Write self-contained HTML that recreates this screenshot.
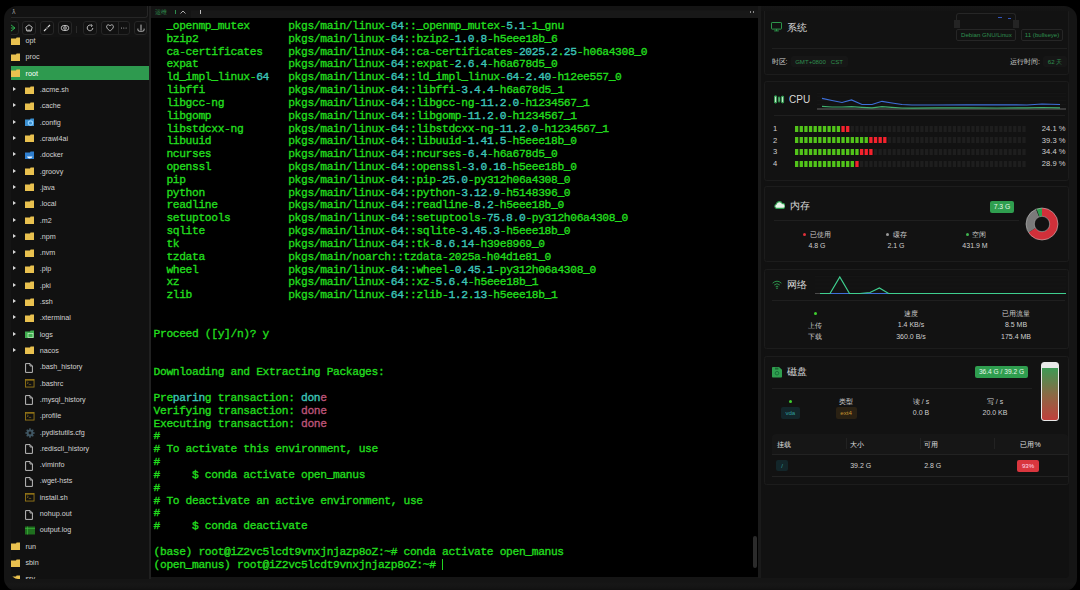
<!DOCTYPE html>
<html><head><meta charset="utf-8">
<style>
*{margin:0;padding:0;box-sizing:border-box}
html,body{width:1080px;height:590px;overflow:hidden;background:#000;font-family:"Liberation Sans",sans-serif}
.abs{position:absolute}
#win{position:absolute;left:3.5px;top:6px;width:1073.5px;height:584.5px;border-radius:13px;background:linear-gradient(#151515 0,#151515 576px,#171717 578px,#141414 582px,#101010 584px);overflow:hidden}
/* sidebar */
#side{position:absolute;left:11px;top:6px;width:138px;height:573px;background:#111;overflow:hidden;border-radius:7px 0 0 7px}
#pathin{position:absolute;z-index:2;left:-4px;top:0;width:141px;height:11.5px;border:1px solid #262626;border-top:none;border-radius:0 0 3px 3px;background:#121212}
#pathin span{position:absolute;left:4px;top:2px;font-size:7px;color:#9a9a9a}
#toolbar{position:absolute;z-index:2;left:0;top:11.5px;width:139px;height:19px;background:#131313}
.tb{position:absolute;top:3.3px;height:14.2px;border:1px solid #262626;border-radius:3px;background:#111}
.tb svg{position:absolute;left:50%;top:50%;transform:translate(-50%,-50%)}
.row{position:absolute;left:0;width:139px;height:14px}
.row.sel{background:#2e9a4f}
.row .ic{position:absolute;top:3px;height:9px;line-height:0}
.row .tx{position:absolute;top:1.5px;font-size:7.2px;color:#d2d2d2;white-space:nowrap;line-height:11px}
.row.sel .tx{color:#fff}
.arr{position:absolute;top:4.5px;width:0;height:0;border-left:3.4px solid #d8d8d8;border-top:2.5px solid transparent;border-bottom:2.5px solid transparent}
#vdiv{position:absolute;left:149.2px;top:6px;width:2.1px;height:573px;background:#202020}
/* terminal */
#term{position:absolute;left:151.4px;top:6px;width:606.6px;height:571px;background:#000;overflow:hidden}
#tabbar{position:absolute;left:0;top:0;width:100%;height:12px;background:linear-gradient(#141414 0,#141414 4px,#181818 5px,#181818 100%)}
#tab{position:absolute;left:0;top:0;width:40px;height:12px;background:#141414}
#tlines{position:absolute;left:2.2px;top:13.9px;font-weight:normal;-webkit-text-stroke:0.35px currentColor;font-family:"Liberation Mono",monospace;font-size:11.3px;letter-spacing:-0.37px;line-height:12.83px;color:#22dc1e;white-space:pre}
#tlines i{font-style:normal;color:#3cc4b8}
#tlines b{font-weight:normal;color:#bd5478}
.cur{display:inline-block;width:1px;height:11px;background:#21d421;vertical-align:-2px}
#sthumb{position:absolute;left:602px;top:530px;width:3.6px;height:32px;border-radius:2px;background:#2b2b2b}
#rdiv{position:absolute;left:758px;top:6px;width:3px;height:572px;background:#1a1a1a}
/* right panel */
#rp{position:absolute;left:761px;top:6px;width:308px;height:572px;background:#111;overflow:hidden;border-radius:0 6px 4px 0}
.card{position:absolute;left:3px;width:305px;border:1px solid #1c1c1c;border-radius:2.5px;background:#121212}
.ttl{position:absolute;font-size:10px;color:#d8d8d8;white-space:nowrap}
.sep{position:absolute;height:1px;background:#1f1f1f}
.lbl{position:absolute;font-size:7px;color:#cfcfcf;white-space:nowrap}
.tag{position:absolute;font-size:6.1px;border-radius:2px;text-align:center;white-space:nowrap}
.cpur{position:absolute;left:0;width:304px;height:6px}
.cpur .cn{position:absolute;left:8px;top:-1.5px;font-size:7.6px;color:#cfcfcf}
.cpur .segs{position:absolute;left:29.5px;top:0;height:6px;width:232px}
.cpur .segs span{position:absolute;top:0;width:3.3px;height:6px}
.cpur .cp{position:absolute;right:3.5px;top:-1.5px;font-size:7.6px;color:#cfcfcf}
.ctr{text-align:center}
</style></head><body>
<div id="win"></div>

<!-- SIDEBAR -->
<div id="side">
  <div id="pathin"><span>ƛ</span></div>
  <div id="toolbar">
    <div class="tb" style="left:-4px;width:11.5px"><svg width="7" height="8" viewBox="0 0 7 8"><path d="M1 0.5l4.5 3.5L1 7.5M0 4h5.5" fill="none" stroke="#2fae4f" stroke-width="1"/></svg></div>
    <div class="tb" style="left:11px;width:14px"><svg width="8" height="8" viewBox="0 0 8 8"><path d="M4 0.8L7.2 3.2L6.2 7H1.8L0.8 3.2Z" fill="none" stroke="#d0d0d0" stroke-width="0.9"/><path d="M2.3 6.2h3.4" stroke="#d0d0d0" stroke-width="0.8"/></svg></div>
    <div class="tb" style="left:29px;width:13.5px"><svg width="8" height="8" viewBox="0 0 8 8"><path d="M1 7L3.2 4.8M4.8 3.2L7 1" stroke="#d8d8d8" stroke-width="1.2"/><circle cx="4" cy="4" r="0.7" fill="#d8d8d8"/></svg></div>
    <div class="tb" style="left:46.5px;width:14px"><svg width="9" height="7" viewBox="0 0 9 7"><ellipse cx="4.5" cy="3.5" rx="4" ry="2.6" fill="none" stroke="#cfcfcf" stroke-width="0.9"/><circle cx="4.5" cy="3.5" r="1.3" fill="none" stroke="#cfcfcf" stroke-width="0.9"/></svg></div>
    <div class="abs" style="left:65.4px;top:8px;width:1px;height:7px;background:#2a2a2a"></div>
    <div class="tb" style="left:72.4px;width:14px"><svg width="8" height="8" viewBox="0 0 8 8"><path d="M6.8 4A2.8 2.8 0 1 1 5.6 1.6" fill="none" stroke="#d0d0d0" stroke-width="0.9"/><path d="M5 0.4L6.4 1.6L5 2.8" fill="none" stroke="#d0d0d0" stroke-width="0.8"/></svg></div>
    <div class="tb" style="left:90.3px;width:29px"><svg style="left:7.8px" width="8" height="8" viewBox="0 0 8 8"><path d="M4 7C4 7 0.6 4.8 0.6 2.7C0.6 1.5 1.4 0.8 2.3 0.8C3.1 0.8 3.7 1.3 4 1.9C4.3 1.3 4.9 0.8 5.7 0.8C6.6 0.8 7.4 1.5 7.4 2.7C7.4 4.8 4 7 4 7Z" fill="none" stroke="#cfcfcf" stroke-width="0.85"/></svg><div class="abs" style="left:15.3px;top:0;width:1px;height:12.2px;background:#262626"></div><svg style="left:21.3px" width="7" height="2" viewBox="0 0 7 2"><circle cx="1" cy="1" r="0.55" fill="#bbb"/><circle cx="3.3" cy="1" r="0.55" fill="#bbb"/><circle cx="5.6" cy="1" r="0.55" fill="#bbb"/></svg></div>
    <div class="tb" style="left:123px;width:13.3px"><svg width="8" height="8" viewBox="0 0 8 8"><path d="M4 0.6v5.6M0.9 4.6v1.2q0 1.4 1.4 1.4h3.4q1.4 0 1.4-1.4V4.6" fill="none" stroke="#d0d0d0" stroke-width="0.9"/></svg></div>
  </div>
  <div id="tree" style="position:absolute;left:0;top:0;width:139px;height:573px">
<div class="row" style="top:27.60px"><span class="ic" style="left:0px"><svg width="9" height="8" viewBox="0 0 9 8"><path d="M0 1.6V8h9V0.6H5.6L5 1.6z" fill="#e9c14f"/></svg></span><span class="tx" style="left:14.5px">opt</span></div>
<div class="row" style="top:43.91px"><span class="ic" style="left:0px"><svg width="9" height="8" viewBox="0 0 9 8"><path d="M0 1.6V8h9V0.6H5.6L5 1.6z" fill="#e9c14f"/></svg></span><span class="tx" style="left:14.5px">proc</span></div>
<div class="row sel" style="top:60.22px"><span class="ic" style="left:0px"><svg width="9" height="8" viewBox="0 0 9 8"><path d="M0 1.6V8h9V0.6H5.6L5 1.6z" fill="#e9c14f"/></svg></span><span class="tx" style="left:14.5px">root</span></div>
<div class="row" style="top:76.53px"><span class="arr" style="left:2px"></span><span class="ic" style="left:14px"><svg width="9" height="8" viewBox="0 0 9 8"><path d="M0 1.6V8h9V0.6H5.6L5 1.6z" fill="#e9c14f"/></svg></span><span class="tx" style="left:28.7px">.acme.sh</span></div>
<div class="row" style="top:92.84px"><span class="arr" style="left:2px"></span><span class="ic" style="left:14px"><svg width="9" height="8" viewBox="0 0 9 8"><path d="M0 1.6V8h9V0.6H5.6L5 1.6z" fill="#e9c14f"/></svg></span><span class="tx" style="left:28.7px">.cache</span></div>
<div class="row" style="top:109.15px"><span class="arr" style="left:2px"></span><span class="ic" style="left:14px"><svg width="10" height="9" viewBox="0 0 10 9"><path d="M0 1.6V8h9V0.6H5.6L5 1.6z" fill="#3b8fd0"/><circle cx="5.5" cy="5" r="2.2" fill="none" stroke="#8fd0ff" stroke-width="1.2"/></svg></span><span class="tx" style="left:28.7px">.config</span></div>
<div class="row" style="top:125.46px"><span class="arr" style="left:2px"></span><span class="ic" style="left:14px"><svg width="9" height="8" viewBox="0 0 9 8"><path d="M0 1.6V8h9V0.6H5.6L5 1.6z" fill="#e9c14f"/></svg></span><span class="tx" style="left:28.7px">.crawl4ai</span></div>
<div class="row" style="top:141.77px"><span class="arr" style="left:2px"></span><span class="ic" style="left:14px"><svg width="10" height="9" viewBox="0 0 10 9"><path d="M0 1.6V8h9V0.6H5.6L5 1.6z" fill="#2f7fd0"/><path d="M2 5.5h5.5q-0.5 2-3 2q-2 0-2.5-2z" fill="#e8f4ff"/></svg></span><span class="tx" style="left:28.7px">.docker</span></div>
<div class="row" style="top:158.08px"><span class="arr" style="left:2px"></span><span class="ic" style="left:14px"><svg width="9" height="8" viewBox="0 0 9 8"><path d="M0 1.6V8h9V0.6H5.6L5 1.6z" fill="#e9c14f"/></svg></span><span class="tx" style="left:28.7px">.groovy</span></div>
<div class="row" style="top:174.39px"><span class="arr" style="left:2px"></span><span class="ic" style="left:14px"><svg width="9" height="8" viewBox="0 0 9 8"><path d="M0 1.6V8h9V0.6H5.6L5 1.6z" fill="#e9c14f"/></svg></span><span class="tx" style="left:28.7px">.java</span></div>
<div class="row" style="top:190.70px"><span class="arr" style="left:2px"></span><span class="ic" style="left:14px"><svg width="9" height="8" viewBox="0 0 9 8"><path d="M0 1.6V8h9V0.6H5.6L5 1.6z" fill="#e9c14f"/></svg></span><span class="tx" style="left:28.7px">.local</span></div>
<div class="row" style="top:207.01px"><span class="arr" style="left:2px"></span><span class="ic" style="left:14px"><svg width="9" height="8" viewBox="0 0 9 8"><path d="M0 1.6V8h9V0.6H5.6L5 1.6z" fill="#e9c14f"/></svg></span><span class="tx" style="left:28.7px">.m2</span></div>
<div class="row" style="top:223.32px"><span class="arr" style="left:2px"></span><span class="ic" style="left:14px"><svg width="9" height="8" viewBox="0 0 9 8"><path d="M0 1.6V8h9V0.6H5.6L5 1.6z" fill="#e9c14f"/></svg></span><span class="tx" style="left:28.7px">.npm</span></div>
<div class="row" style="top:239.63px"><span class="arr" style="left:2px"></span><span class="ic" style="left:14px"><svg width="9" height="8" viewBox="0 0 9 8"><path d="M0 1.6V8h9V0.6H5.6L5 1.6z" fill="#e9c14f"/></svg></span><span class="tx" style="left:28.7px">.nvm</span></div>
<div class="row" style="top:255.94px"><span class="arr" style="left:2px"></span><span class="ic" style="left:14px"><svg width="9" height="8" viewBox="0 0 9 8"><path d="M0 1.6V8h9V0.6H5.6L5 1.6z" fill="#e9c14f"/></svg></span><span class="tx" style="left:28.7px">.pip</span></div>
<div class="row" style="top:272.25px"><span class="arr" style="left:2px"></span><span class="ic" style="left:14px"><svg width="9" height="8" viewBox="0 0 9 8"><path d="M0 1.6V8h9V0.6H5.6L5 1.6z" fill="#e9c14f"/></svg></span><span class="tx" style="left:28.7px">.pki</span></div>
<div class="row" style="top:288.56px"><span class="arr" style="left:2px"></span><span class="ic" style="left:14px"><svg width="9" height="8" viewBox="0 0 9 8"><path d="M0 1.6V8h9V0.6H5.6L5 1.6z" fill="#e9c14f"/></svg></span><span class="tx" style="left:28.7px">.ssh</span></div>
<div class="row" style="top:304.87px"><span class="arr" style="left:2px"></span><span class="ic" style="left:14px"><svg width="9" height="8" viewBox="0 0 9 8"><path d="M0 1.6V8h9V0.6H5.6L5 1.6z" fill="#e9c14f"/></svg></span><span class="tx" style="left:28.7px">.xterminal</span></div>
<div class="row" style="top:321.18px"><span class="arr" style="left:2px"></span><span class="ic" style="left:14px"><svg width="10" height="9" viewBox="0 0 10 9"><path d="M0 1.6V8h9V0.6H5.6L5 1.6z" fill="#3fae4f"/><rect x="3" y="3.5" width="5" height="4" fill="none" stroke="#c8f0c8" stroke-width="0.7"/></svg></span><span class="tx" style="left:28.7px">logs</span></div>
<div class="row" style="top:337.49px"><span class="arr" style="left:2px"></span><span class="ic" style="left:14px"><svg width="9" height="8" viewBox="0 0 9 8"><path d="M0 1.6V8h9V0.6H5.6L5 1.6z" fill="#e9c14f"/></svg></span><span class="tx" style="left:28.7px">nacos</span></div>
<div class="row" style="top:353.80px"><span class="ic" style="left:14px"><svg width="8" height="10" viewBox="0 0 8 10"><path d="M0.6 0.6h4.4l2.4 2.4v6.4H0.6z" fill="none" stroke="#cfcfcf" stroke-width="0.9"/><path d="M5 0.6v2.4h2.4" fill="none" stroke="#cfcfcf" stroke-width="0.8"/></svg></span><span class="tx" style="left:28.7px">.bash_history</span></div>
<div class="row" style="top:370.11px"><span class="ic" style="left:14px"><svg width="10" height="9" viewBox="0 0 10 9"><rect x="0.45" y="0.45" width="8.6" height="7.6" fill="none" stroke="#977818" stroke-width="0.9"/><path d="M0.45 1.3h8.6" stroke="#977818" stroke-width="0.8"/><path d="M1.8 2.6l1.6 1.2L1.8 5M3.8 5.4h2.4" fill="none" stroke="#8a6e18" stroke-width="0.7"/></svg></span><span class="tx" style="left:28.7px">.bashrc</span></div>
<div class="row" style="top:386.42px"><span class="ic" style="left:14px"><svg width="8" height="10" viewBox="0 0 8 10"><path d="M0.6 0.6h4.4l2.4 2.4v6.4H0.6z" fill="none" stroke="#cfcfcf" stroke-width="0.9"/><path d="M5 0.6v2.4h2.4" fill="none" stroke="#cfcfcf" stroke-width="0.8"/></svg></span><span class="tx" style="left:28.7px">.mysql_history</span></div>
<div class="row" style="top:402.73px"><span class="ic" style="left:14px"><svg width="10" height="9" viewBox="0 0 10 9"><rect x="0.45" y="0.45" width="8.6" height="7.6" fill="none" stroke="#977818" stroke-width="0.9"/><path d="M0.45 1.3h8.6" stroke="#977818" stroke-width="0.8"/><path d="M1.8 2.6l1.6 1.2L1.8 5M3.8 5.4h2.4" fill="none" stroke="#8a6e18" stroke-width="0.7"/></svg></span><span class="tx" style="left:28.7px">.profile</span></div>
<div class="row" style="top:419.04px"><span class="ic" style="left:14px"><svg width="10" height="10" viewBox="0 0 10 10"><path d="M9.64 4.26 L9.64 5.74 L8.40 5.82 L7.98 6.83 L8.80 7.76 L7.76 8.80 L6.83 7.98 L5.82 8.40 L5.74 9.64 L4.26 9.64 L4.18 8.40 L3.17 7.98 L2.24 8.80 L1.20 7.76 L2.02 6.83 L1.60 5.82 L0.36 5.74 L0.36 4.26 L1.60 4.18 L2.02 3.17 L1.20 2.24 L2.24 1.20 L3.17 2.02 L4.18 1.60 L4.26 0.36 L5.74 0.36 L5.82 1.60 L6.83 2.02 L7.76 1.20 L8.80 2.24 L7.98 3.17 L8.40 4.18Z" fill="#3f5663"/><circle cx="5" cy="5" r="1.4" fill="#111"/></svg></span><span class="tx" style="left:28.7px">.pydistutils.cfg</span></div>
<div class="row" style="top:435.35px"><span class="ic" style="left:14px"><svg width="8" height="10" viewBox="0 0 8 10"><path d="M0.6 0.6h4.4l2.4 2.4v6.4H0.6z" fill="none" stroke="#cfcfcf" stroke-width="0.9"/><path d="M5 0.6v2.4h2.4" fill="none" stroke="#cfcfcf" stroke-width="0.8"/></svg></span><span class="tx" style="left:28.7px">.rediscli_history</span></div>
<div class="row" style="top:451.66px"><span class="ic" style="left:14px"><svg width="8" height="10" viewBox="0 0 8 10"><path d="M0.6 0.6h4.4l2.4 2.4v6.4H0.6z" fill="none" stroke="#cfcfcf" stroke-width="0.9"/><path d="M5 0.6v2.4h2.4" fill="none" stroke="#cfcfcf" stroke-width="0.8"/></svg></span><span class="tx" style="left:28.7px">.viminfo</span></div>
<div class="row" style="top:467.97px"><span class="ic" style="left:14px"><svg width="8" height="10" viewBox="0 0 8 10"><path d="M0.6 0.6h4.4l2.4 2.4v6.4H0.6z" fill="none" stroke="#cfcfcf" stroke-width="0.9"/><path d="M5 0.6v2.4h2.4" fill="none" stroke="#cfcfcf" stroke-width="0.8"/></svg></span><span class="tx" style="left:28.7px">.wget-hsts</span></div>
<div class="row" style="top:484.28px"><span class="ic" style="left:14px"><svg width="10" height="9" viewBox="0 0 10 9"><rect x="0.45" y="0.45" width="8.6" height="7.6" fill="none" stroke="#977818" stroke-width="0.9"/><path d="M0.45 1.3h8.6" stroke="#977818" stroke-width="0.8"/><path d="M1.8 2.6l1.6 1.2L1.8 5M3.8 5.4h2.4" fill="none" stroke="#8a6e18" stroke-width="0.7"/></svg></span><span class="tx" style="left:28.7px">install.sh</span></div>
<div class="row" style="top:500.59px"><span class="ic" style="left:14px"><svg width="8" height="10" viewBox="0 0 8 10"><path d="M0.6 0.6h4.4l2.4 2.4v6.4H0.6z" fill="none" stroke="#cfcfcf" stroke-width="0.9"/><path d="M5 0.6v2.4h2.4" fill="none" stroke="#cfcfcf" stroke-width="0.8"/></svg></span><span class="tx" style="left:28.7px">nohup.out</span></div>
<div class="row" style="top:516.90px"><span class="ic" style="left:14px"><svg width="10" height="9" viewBox="0 0 10 9"><rect x="0" y="0.5" width="10" height="8" fill="#1f6f1f"/><path d="M2.5 0.5v8M0 2.5h10" stroke="#3fbf3f" stroke-width="0.6"/></svg></span><span class="tx" style="left:28.7px">output.log</span></div>
<div class="row" style="top:533.21px"><span class="ic" style="left:0px"><svg width="9" height="8" viewBox="0 0 9 8"><path d="M0 1.6V8h9V0.6H5.6L5 1.6z" fill="#e9c14f"/></svg></span><span class="tx" style="left:14.5px">run</span></div>
<div class="row" style="top:549.52px"><span class="ic" style="left:0px"><svg width="9" height="8" viewBox="0 0 9 8"><path d="M0 1.6V8h9V0.6H5.6L5 1.6z" fill="#e9c14f"/></svg></span><span class="tx" style="left:14.5px">sbin</span></div>
<div class="row" style="top:565.83px"><span class="ic" style="left:0px"><svg width="9" height="8" viewBox="0 0 9 8"><path d="M0 1.6V8h9V0.6H5.6L5 1.6z" fill="#e9c14f"/></svg></span><span class="tx" style="left:14.5px">srv</span></div>
  </div>
</div>
<div id="vdiv"></div>

<!-- TERMINAL -->
<div id="term">
  <div id="tabbar"><div id="tab"></div>
    <span class="abs" style="left:4px;top:3px;font-size:5.5px;color:#2f8f4f">运维</span>
    <span class="abs" style="left:24px;top:3.5px;width:1px;height:4px;background:#2f8f4f"></span>
    <svg class="abs" style="left:29px;top:3.5px" width="6" height="4" viewBox="0 0 6 4"><path d="M0.5 3.5L3 1L5.5 3.5" fill="none" stroke="#bbb" stroke-width="0.9"/></svg>
    <span class="abs" style="left:48.5px;top:3.5px;width:1px;height:4px;background:#bbb"></span>
    <span class="abs" style="left:598.6px;top:5.2px;width:1px;height:1.5px;background:#888"></span>
    <span class="abs" style="left:601.8px;top:5.2px;width:1px;height:1.5px;background:#888"></span>
  </div>
  <div id="tlines"><div class="ln">  _openmp_mutex      pkgs/main/linux-<i>64</i>::_openmp_mutex-<i>5.1</i>-1_gnu</div><div class="ln">  bzip2              pkgs/main/linux-<i>64</i>::bzip2-<i>1.0</i>.<i>8</i>-h5eee18b_6</div><div class="ln">  ca-certificates    pkgs/main/linux-<i>64</i>::ca-certificates-<i>2025.2</i>.<i>25</i>-h06a4308_0</div><div class="ln">  expat              pkgs/main/linux-<i>64</i>::expat-<i>2.6</i>.<i>4</i>-h6a678d5_0</div><div class="ln">  ld_impl_linux-<i>64</i>   pkgs/main/linux-<i>64</i>::ld_impl_linux-<i>64</i>-<i>2.40</i>-h12ee557_0</div><div class="ln">  libffi             pkgs/main/linux-<i>64</i>::libffi-<i>3.4</i>.<i>4</i>-h6a678d5_1</div><div class="ln">  libgcc-ng          pkgs/main/linux-<i>64</i>::libgcc-ng-<i>11.2</i>.<i>0</i>-h1234567_1</div><div class="ln">  libgomp            pkgs/main/linux-<i>64</i>::libgomp-<i>11.2</i>.<i>0</i>-h1234567_1</div><div class="ln">  libstdcxx-ng       pkgs/main/linux-<i>64</i>::libstdcxx-ng-<i>11.2</i>.<i>0</i>-h1234567_1</div><div class="ln">  libuuid            pkgs/main/linux-<i>64</i>::libuuid-<i>1.41</i>.<i>5</i>-h5eee18b_0</div><div class="ln">  ncurses            pkgs/main/linux-<i>64</i>::ncurses-<i>6.4</i>-h6a678d5_0</div><div class="ln">  openssl            pkgs/main/linux-<i>64</i>::openssl-<i>3.0</i>.<i>16</i>-h5eee18b_0</div><div class="ln">  pip                pkgs/main/linux-<i>64</i>::pip-<i>25.0</i>-py312h06a4308_0</div><div class="ln">  python             pkgs/main/linux-<i>64</i>::python-<i>3.12</i>.<i>9</i>-h5148396_0</div><div class="ln">  readline           pkgs/main/linux-<i>64</i>::readline-<i>8.2</i>-h5eee18b_0</div><div class="ln">  setuptools         pkgs/main/linux-<i>64</i>::setuptools-<i>75.8</i>.<i>0</i>-py312h06a4308_0</div><div class="ln">  sqlite             pkgs/main/linux-<i>64</i>::sqlite-<i>3.45</i>.<i>3</i>-h5eee18b_0</div><div class="ln">  tk                 pkgs/main/linux-<i>64</i>::tk-<i>8.6</i>.<i>14</i>-h39e8969_0</div><div class="ln">  tzdata             pkgs/main/noarch::tzdata-2025a-h04d1e81_0</div><div class="ln">  wheel              pkgs/main/linux-<i>64</i>::wheel-<i>0.45</i>.<i>1</i>-py312h06a4308_0</div><div class="ln">  xz                 pkgs/main/linux-<i>64</i>::xz-<i>5.6</i>.<i>4</i>-h5eee18b_1</div><div class="ln">  zlib               pkgs/main/linux-<i>64</i>::zlib-<i>1.2</i>.<i>13</i>-h5eee18b_1</div><div class="ln">&nbsp;</div><div class="ln">&nbsp;</div><div class="ln">Proceed ([y]/n)? y</div><div class="ln">&nbsp;</div><div class="ln">&nbsp;</div><div class="ln">Downloading and Extracting Packages:</div><div class="ln">&nbsp;</div><div class="ln">Pre<i>parin</i>g transaction: <i>don</i><b>e</b></div><div class="ln">Verifying transaction: <b>done</b></div><div class="ln">Executing transaction: <b>done</b></div><div class="ln">#</div><div class="ln"># To activate this environment, use</div><div class="ln">#</div><div class="ln">#     $ conda activate open_manus</div><div class="ln">#</div><div class="ln"># To deactivate an active environment, use</div><div class="ln">#</div><div class="ln">#     $ conda deactivate</div><div class="ln">&nbsp;</div><div class="ln">(base) root@iZ2vc5lcdt9vnxjnjazp8oZ:~# conda activate open_manus</div><div class="ln">(open_manus) root@iZ2vc5lcdt9vnxjnjazp8oZ:~# <span class="cur"></span></div></div>
  <div id="sthumb"></div>
</div>
<div id="rdiv"></div>

<!-- RIGHT PANEL -->
<div id="rp">
  <!-- card 1 system -->
  <div class="card" style="top:-6px;height:74.6px"></div>
  <div class="abs" style="left:0;top:0;width:308px;height:5px;background:linear-gradient(#161616,#131313)"></div>
  <!-- card 2 cpu -->
  <div class="card" style="top:75px;height:99.5px"></div>
  <!-- card 3 mem -->
  <div class="card" style="top:180.4px;height:75.5px"></div>
  <!-- card 4 net -->
  <div class="card" style="top:262.8px;height:80.6px"></div>
  <!-- card 5 disk -->
  <div class="card" style="top:350.4px;height:128.4px"></div>
</div>

<!-- right panel content in page coordinates -->
<div id="rpc" style="position:absolute;left:0;top:0;width:1080px;height:590px">
  <!-- system -->
  <svg class="abs" style="left:771px;top:22px" width="11" height="9.5" viewBox="0 0 11 9.5"><rect x="0.5" y="0.5" width="10" height="6.6" rx="0.6" fill="none" stroke="#2f9e4f" stroke-width="0.95"/><path d="M5.5 7.1v1.8M3.2 8.9h4.6" stroke="#2f9e4f" stroke-width="0.95"/></svg>
  <span class="ttl" style="left:787px;top:20.8px">系统</span>
  <div class="abs" style="left:956px;top:13px;width:60px;height:15px;border:1px solid #262626;border-bottom:none;border-radius:3px 3px 0 0;background:#121212"></div>
  <div class="abs" style="left:954px;top:19.5px;width:6px;height:8px;background:#242424"></div>
  <div class="abs" style="left:1012.5px;top:19.5px;width:6px;height:8px;background:#242424"></div>
  <div class="abs" style="left:998px;top:17px;width:4px;height:1px;background:#3355bb"></div>
  <div class="abs" style="left:1007.5px;top:18px;width:3.5px;height:1px;background:#3355bb"></div>
  <div class="tag" style="left:956.3px;top:29.4px;width:60.2px;height:11.2px;line-height:9.5px;border:1px solid #262626;color:#2f8f4f;background:#121212">Debian GNU/Linux</div>
  <div class="tag" style="left:1021.3px;top:29.4px;width:41.5px;height:11.2px;line-height:9.5px;border:1px solid #262626;color:#2f8f4f;background:#121212">11 (bullseye)</div>
  <div class="sep" style="left:771.5px;top:48px;width:295.5px"></div>
  <span class="lbl" style="left:771.5px;top:56.5px">时区:</span>
  <div class="tag" style="left:790.6px;top:56px;width:57px;height:11px;line-height:11px;color:#2f8f4f;background:#161616">GMT+0800&nbsp;&nbsp;&nbsp;CST</div>
  <span class="lbl" style="left:1010px;top:56.5px">运行时间:</span>
  <div class="tag" style="left:1043px;top:55.6px;width:24px;height:11.4px;line-height:11.4px;color:#2f8f4f;background:#161616">62 天</div>

  <!-- cpu -->
  <svg class="abs" style="left:774px;top:95px" width="11" height="9" viewBox="0 0 11 9"><path d="M1.6 0v9M5.1 1v7M8.6 0.4v8.4" stroke="#2f9e4f" stroke-width="0.6"/><rect x="0.6" y="1.2" width="2" height="6.4" fill="#cfe8d4" stroke="#2f9e4f" stroke-width="0.9"/><rect x="4.3" y="2.6" width="1.6" height="3.8" fill="#7fc08f" stroke="#2f9e4f" stroke-width="0.7"/><rect x="7.6" y="1.6" width="2" height="5.8" fill="#cfe8d4" stroke="#2f9e4f" stroke-width="0.9"/></svg>
  <span class="ttl" style="left:789px;top:94.2px">CPU</span>
  <svg class="abs" style="left:817px;top:90px" width="249" height="20" viewBox="0 0 249 20">
    <path d="M0 3.4h249M0 6.9h249M0 10.6h249M0 14.5h249" stroke="#191919" stroke-width="0.6"/>
    <path d="M0 19h249" stroke="#4a4a4a" stroke-width="1.3"/>
    <polyline points="5,8.3 15,10.5 25,12.5 34.5,10 45,14.5 55,14.5 65,11.3 75,13 85,14.5 95,15 120,15 150,14.8 180,14.8 210,15 225,14 243,14.5" fill="none" stroke="#3d6fd8" stroke-width="1.2"/>
    <polyline points="5,16.4 15,17 25,17 34.5,16.6 45,17.3 55,17.8 65,16.6 75,17.3 85,18 95,18.2 120,17.8 150,17.8 180,18 210,17.8 225,17.5 243,17.8" fill="none" stroke="#3fae6f" stroke-width="1.2"/>
  </svg>
  <div class="sep" style="left:774px;top:115px;width:291px"></div>
  <div style="position:absolute;left:765px;top:0">
<div class="cpur" style="top:125.60px"><span class="cn">1</span><div class="segs"><svg width="232" height="6" style="position:absolute;left:0;top:0"><rect x="0.00" y="0" width="3.3" height="6" fill="#52c41a"/><rect x="4.64" y="0" width="3.3" height="6" fill="#52c41a"/><rect x="9.28" y="0" width="3.3" height="6" fill="#52c41a"/><rect x="13.92" y="0" width="3.3" height="6" fill="#52c41a"/><rect x="18.56" y="0" width="3.3" height="6" fill="#52c41a"/><rect x="23.20" y="0" width="3.3" height="6" fill="#52c41a"/><rect x="27.84" y="0" width="3.3" height="6" fill="#52c41a"/><rect x="32.48" y="0" width="3.3" height="6" fill="#52c41a"/><rect x="37.12" y="0" width="3.3" height="6" fill="#52c41a"/><rect x="41.76" y="0" width="3.3" height="6" fill="#52c41a"/><rect x="46.40" y="0" width="3.3" height="6" fill="#f5222d"/><rect x="51.04" y="0" width="3.3" height="6" fill="#f5222d"/><rect x="55.68" y="0" width="3.3" height="6" fill="#1e1e1e"/><rect x="60.32" y="0" width="3.3" height="6" fill="#1e1e1e"/><rect x="64.96" y="0" width="3.3" height="6" fill="#1e1e1e"/><rect x="69.60" y="0" width="3.3" height="6" fill="#1e1e1e"/><rect x="74.24" y="0" width="3.3" height="6" fill="#1e1e1e"/><rect x="78.88" y="0" width="3.3" height="6" fill="#1e1e1e"/><rect x="83.52" y="0" width="3.3" height="6" fill="#1e1e1e"/><rect x="88.16" y="0" width="3.3" height="6" fill="#1e1e1e"/><rect x="92.80" y="0" width="3.3" height="6" fill="#1e1e1e"/><rect x="97.44" y="0" width="3.3" height="6" fill="#1e1e1e"/><rect x="102.08" y="0" width="3.3" height="6" fill="#1e1e1e"/><rect x="106.72" y="0" width="3.3" height="6" fill="#1e1e1e"/><rect x="111.36" y="0" width="3.3" height="6" fill="#1e1e1e"/><rect x="116.00" y="0" width="3.3" height="6" fill="#1e1e1e"/><rect x="120.64" y="0" width="3.3" height="6" fill="#1e1e1e"/><rect x="125.28" y="0" width="3.3" height="6" fill="#1e1e1e"/><rect x="129.92" y="0" width="3.3" height="6" fill="#1e1e1e"/><rect x="134.56" y="0" width="3.3" height="6" fill="#1e1e1e"/><rect x="139.20" y="0" width="3.3" height="6" fill="#1e1e1e"/><rect x="143.84" y="0" width="3.3" height="6" fill="#1e1e1e"/><rect x="148.48" y="0" width="3.3" height="6" fill="#1e1e1e"/><rect x="153.12" y="0" width="3.3" height="6" fill="#1e1e1e"/><rect x="157.76" y="0" width="3.3" height="6" fill="#1e1e1e"/><rect x="162.40" y="0" width="3.3" height="6" fill="#1e1e1e"/><rect x="167.04" y="0" width="3.3" height="6" fill="#1e1e1e"/><rect x="171.68" y="0" width="3.3" height="6" fill="#1e1e1e"/><rect x="176.32" y="0" width="3.3" height="6" fill="#1e1e1e"/><rect x="180.96" y="0" width="3.3" height="6" fill="#1e1e1e"/><rect x="185.60" y="0" width="3.3" height="6" fill="#1e1e1e"/><rect x="190.24" y="0" width="3.3" height="6" fill="#1e1e1e"/><rect x="194.88" y="0" width="3.3" height="6" fill="#1e1e1e"/><rect x="199.52" y="0" width="3.3" height="6" fill="#1e1e1e"/><rect x="204.16" y="0" width="3.3" height="6" fill="#1e1e1e"/><rect x="208.80" y="0" width="3.3" height="6" fill="#1e1e1e"/><rect x="213.44" y="0" width="3.3" height="6" fill="#1e1e1e"/><rect x="218.08" y="0" width="3.3" height="6" fill="#1e1e1e"/><rect x="222.72" y="0" width="3.3" height="6" fill="#1e1e1e"/><rect x="227.36" y="0" width="3.3" height="6" fill="#1e1e1e"/></svg></div><span class="cp">24.1 %</span></div>
<div class="cpur" style="top:137.27px"><span class="cn">2</span><div class="segs"><svg width="232" height="6" style="position:absolute;left:0;top:0"><rect x="0.00" y="0" width="3.3" height="6" fill="#52c41a"/><rect x="4.64" y="0" width="3.3" height="6" fill="#52c41a"/><rect x="9.28" y="0" width="3.3" height="6" fill="#52c41a"/><rect x="13.92" y="0" width="3.3" height="6" fill="#52c41a"/><rect x="18.56" y="0" width="3.3" height="6" fill="#52c41a"/><rect x="23.20" y="0" width="3.3" height="6" fill="#52c41a"/><rect x="27.84" y="0" width="3.3" height="6" fill="#52c41a"/><rect x="32.48" y="0" width="3.3" height="6" fill="#52c41a"/><rect x="37.12" y="0" width="3.3" height="6" fill="#52c41a"/><rect x="41.76" y="0" width="3.3" height="6" fill="#52c41a"/><rect x="46.40" y="0" width="3.3" height="6" fill="#52c41a"/><rect x="51.04" y="0" width="3.3" height="6" fill="#52c41a"/><rect x="55.68" y="0" width="3.3" height="6" fill="#52c41a"/><rect x="60.32" y="0" width="3.3" height="6" fill="#52c41a"/><rect x="64.96" y="0" width="3.3" height="6" fill="#52c41a"/><rect x="69.60" y="0" width="3.3" height="6" fill="#52c41a"/><rect x="74.24" y="0" width="3.3" height="6" fill="#f5222d"/><rect x="78.88" y="0" width="3.3" height="6" fill="#f5222d"/><rect x="83.52" y="0" width="3.3" height="6" fill="#f5222d"/><rect x="88.16" y="0" width="3.3" height="6" fill="#f5222d"/><rect x="92.80" y="0" width="3.3" height="6" fill="#1e1e1e"/><rect x="97.44" y="0" width="3.3" height="6" fill="#1e1e1e"/><rect x="102.08" y="0" width="3.3" height="6" fill="#1e1e1e"/><rect x="106.72" y="0" width="3.3" height="6" fill="#1e1e1e"/><rect x="111.36" y="0" width="3.3" height="6" fill="#1e1e1e"/><rect x="116.00" y="0" width="3.3" height="6" fill="#1e1e1e"/><rect x="120.64" y="0" width="3.3" height="6" fill="#1e1e1e"/><rect x="125.28" y="0" width="3.3" height="6" fill="#1e1e1e"/><rect x="129.92" y="0" width="3.3" height="6" fill="#1e1e1e"/><rect x="134.56" y="0" width="3.3" height="6" fill="#1e1e1e"/><rect x="139.20" y="0" width="3.3" height="6" fill="#1e1e1e"/><rect x="143.84" y="0" width="3.3" height="6" fill="#1e1e1e"/><rect x="148.48" y="0" width="3.3" height="6" fill="#1e1e1e"/><rect x="153.12" y="0" width="3.3" height="6" fill="#1e1e1e"/><rect x="157.76" y="0" width="3.3" height="6" fill="#1e1e1e"/><rect x="162.40" y="0" width="3.3" height="6" fill="#1e1e1e"/><rect x="167.04" y="0" width="3.3" height="6" fill="#1e1e1e"/><rect x="171.68" y="0" width="3.3" height="6" fill="#1e1e1e"/><rect x="176.32" y="0" width="3.3" height="6" fill="#1e1e1e"/><rect x="180.96" y="0" width="3.3" height="6" fill="#1e1e1e"/><rect x="185.60" y="0" width="3.3" height="6" fill="#1e1e1e"/><rect x="190.24" y="0" width="3.3" height="6" fill="#1e1e1e"/><rect x="194.88" y="0" width="3.3" height="6" fill="#1e1e1e"/><rect x="199.52" y="0" width="3.3" height="6" fill="#1e1e1e"/><rect x="204.16" y="0" width="3.3" height="6" fill="#1e1e1e"/><rect x="208.80" y="0" width="3.3" height="6" fill="#1e1e1e"/><rect x="213.44" y="0" width="3.3" height="6" fill="#1e1e1e"/><rect x="218.08" y="0" width="3.3" height="6" fill="#1e1e1e"/><rect x="222.72" y="0" width="3.3" height="6" fill="#1e1e1e"/><rect x="227.36" y="0" width="3.3" height="6" fill="#1e1e1e"/></svg></div><span class="cp">39.3 %</span></div>
<div class="cpur" style="top:148.94px"><span class="cn">3</span><div class="segs"><svg width="232" height="6" style="position:absolute;left:0;top:0"><rect x="0.00" y="0" width="3.3" height="6" fill="#52c41a"/><rect x="4.64" y="0" width="3.3" height="6" fill="#52c41a"/><rect x="9.28" y="0" width="3.3" height="6" fill="#52c41a"/><rect x="13.92" y="0" width="3.3" height="6" fill="#52c41a"/><rect x="18.56" y="0" width="3.3" height="6" fill="#52c41a"/><rect x="23.20" y="0" width="3.3" height="6" fill="#52c41a"/><rect x="27.84" y="0" width="3.3" height="6" fill="#52c41a"/><rect x="32.48" y="0" width="3.3" height="6" fill="#52c41a"/><rect x="37.12" y="0" width="3.3" height="6" fill="#52c41a"/><rect x="41.76" y="0" width="3.3" height="6" fill="#52c41a"/><rect x="46.40" y="0" width="3.3" height="6" fill="#52c41a"/><rect x="51.04" y="0" width="3.3" height="6" fill="#52c41a"/><rect x="55.68" y="0" width="3.3" height="6" fill="#52c41a"/><rect x="60.32" y="0" width="3.3" height="6" fill="#52c41a"/><rect x="64.96" y="0" width="3.3" height="6" fill="#f5222d"/><rect x="69.60" y="0" width="3.3" height="6" fill="#f5222d"/><rect x="74.24" y="0" width="3.3" height="6" fill="#f5222d"/><rect x="78.88" y="0" width="3.3" height="6" fill="#1e1e1e"/><rect x="83.52" y="0" width="3.3" height="6" fill="#1e1e1e"/><rect x="88.16" y="0" width="3.3" height="6" fill="#1e1e1e"/><rect x="92.80" y="0" width="3.3" height="6" fill="#1e1e1e"/><rect x="97.44" y="0" width="3.3" height="6" fill="#1e1e1e"/><rect x="102.08" y="0" width="3.3" height="6" fill="#1e1e1e"/><rect x="106.72" y="0" width="3.3" height="6" fill="#1e1e1e"/><rect x="111.36" y="0" width="3.3" height="6" fill="#1e1e1e"/><rect x="116.00" y="0" width="3.3" height="6" fill="#1e1e1e"/><rect x="120.64" y="0" width="3.3" height="6" fill="#1e1e1e"/><rect x="125.28" y="0" width="3.3" height="6" fill="#1e1e1e"/><rect x="129.92" y="0" width="3.3" height="6" fill="#1e1e1e"/><rect x="134.56" y="0" width="3.3" height="6" fill="#1e1e1e"/><rect x="139.20" y="0" width="3.3" height="6" fill="#1e1e1e"/><rect x="143.84" y="0" width="3.3" height="6" fill="#1e1e1e"/><rect x="148.48" y="0" width="3.3" height="6" fill="#1e1e1e"/><rect x="153.12" y="0" width="3.3" height="6" fill="#1e1e1e"/><rect x="157.76" y="0" width="3.3" height="6" fill="#1e1e1e"/><rect x="162.40" y="0" width="3.3" height="6" fill="#1e1e1e"/><rect x="167.04" y="0" width="3.3" height="6" fill="#1e1e1e"/><rect x="171.68" y="0" width="3.3" height="6" fill="#1e1e1e"/><rect x="176.32" y="0" width="3.3" height="6" fill="#1e1e1e"/><rect x="180.96" y="0" width="3.3" height="6" fill="#1e1e1e"/><rect x="185.60" y="0" width="3.3" height="6" fill="#1e1e1e"/><rect x="190.24" y="0" width="3.3" height="6" fill="#1e1e1e"/><rect x="194.88" y="0" width="3.3" height="6" fill="#1e1e1e"/><rect x="199.52" y="0" width="3.3" height="6" fill="#1e1e1e"/><rect x="204.16" y="0" width="3.3" height="6" fill="#1e1e1e"/><rect x="208.80" y="0" width="3.3" height="6" fill="#1e1e1e"/><rect x="213.44" y="0" width="3.3" height="6" fill="#1e1e1e"/><rect x="218.08" y="0" width="3.3" height="6" fill="#1e1e1e"/><rect x="222.72" y="0" width="3.3" height="6" fill="#1e1e1e"/><rect x="227.36" y="0" width="3.3" height="6" fill="#1e1e1e"/></svg></div><span class="cp">34.4 %</span></div>
<div class="cpur" style="top:160.61px"><span class="cn">4</span><div class="segs"><svg width="232" height="6" style="position:absolute;left:0;top:0"><rect x="0.00" y="0" width="3.3" height="6" fill="#52c41a"/><rect x="4.64" y="0" width="3.3" height="6" fill="#52c41a"/><rect x="9.28" y="0" width="3.3" height="6" fill="#52c41a"/><rect x="13.92" y="0" width="3.3" height="6" fill="#52c41a"/><rect x="18.56" y="0" width="3.3" height="6" fill="#52c41a"/><rect x="23.20" y="0" width="3.3" height="6" fill="#52c41a"/><rect x="27.84" y="0" width="3.3" height="6" fill="#52c41a"/><rect x="32.48" y="0" width="3.3" height="6" fill="#52c41a"/><rect x="37.12" y="0" width="3.3" height="6" fill="#52c41a"/><rect x="41.76" y="0" width="3.3" height="6" fill="#52c41a"/><rect x="46.40" y="0" width="3.3" height="6" fill="#52c41a"/><rect x="51.04" y="0" width="3.3" height="6" fill="#52c41a"/><rect x="55.68" y="0" width="3.3" height="6" fill="#52c41a"/><rect x="60.32" y="0" width="3.3" height="6" fill="#f5222d"/><rect x="64.96" y="0" width="3.3" height="6" fill="#1e1e1e"/><rect x="69.60" y="0" width="3.3" height="6" fill="#1e1e1e"/><rect x="74.24" y="0" width="3.3" height="6" fill="#1e1e1e"/><rect x="78.88" y="0" width="3.3" height="6" fill="#1e1e1e"/><rect x="83.52" y="0" width="3.3" height="6" fill="#1e1e1e"/><rect x="88.16" y="0" width="3.3" height="6" fill="#1e1e1e"/><rect x="92.80" y="0" width="3.3" height="6" fill="#1e1e1e"/><rect x="97.44" y="0" width="3.3" height="6" fill="#1e1e1e"/><rect x="102.08" y="0" width="3.3" height="6" fill="#1e1e1e"/><rect x="106.72" y="0" width="3.3" height="6" fill="#1e1e1e"/><rect x="111.36" y="0" width="3.3" height="6" fill="#1e1e1e"/><rect x="116.00" y="0" width="3.3" height="6" fill="#1e1e1e"/><rect x="120.64" y="0" width="3.3" height="6" fill="#1e1e1e"/><rect x="125.28" y="0" width="3.3" height="6" fill="#1e1e1e"/><rect x="129.92" y="0" width="3.3" height="6" fill="#1e1e1e"/><rect x="134.56" y="0" width="3.3" height="6" fill="#1e1e1e"/><rect x="139.20" y="0" width="3.3" height="6" fill="#1e1e1e"/><rect x="143.84" y="0" width="3.3" height="6" fill="#1e1e1e"/><rect x="148.48" y="0" width="3.3" height="6" fill="#1e1e1e"/><rect x="153.12" y="0" width="3.3" height="6" fill="#1e1e1e"/><rect x="157.76" y="0" width="3.3" height="6" fill="#1e1e1e"/><rect x="162.40" y="0" width="3.3" height="6" fill="#1e1e1e"/><rect x="167.04" y="0" width="3.3" height="6" fill="#1e1e1e"/><rect x="171.68" y="0" width="3.3" height="6" fill="#1e1e1e"/><rect x="176.32" y="0" width="3.3" height="6" fill="#1e1e1e"/><rect x="180.96" y="0" width="3.3" height="6" fill="#1e1e1e"/><rect x="185.60" y="0" width="3.3" height="6" fill="#1e1e1e"/><rect x="190.24" y="0" width="3.3" height="6" fill="#1e1e1e"/><rect x="194.88" y="0" width="3.3" height="6" fill="#1e1e1e"/><rect x="199.52" y="0" width="3.3" height="6" fill="#1e1e1e"/><rect x="204.16" y="0" width="3.3" height="6" fill="#1e1e1e"/><rect x="208.80" y="0" width="3.3" height="6" fill="#1e1e1e"/><rect x="213.44" y="0" width="3.3" height="6" fill="#1e1e1e"/><rect x="218.08" y="0" width="3.3" height="6" fill="#1e1e1e"/><rect x="222.72" y="0" width="3.3" height="6" fill="#1e1e1e"/><rect x="227.36" y="0" width="3.3" height="6" fill="#1e1e1e"/></svg></div><span class="cp">28.9 %</span></div>

  </div>

  <!-- memory -->
  <svg class="abs" style="left:773.5px;top:201px" width="11.5" height="8" viewBox="0 0 11.5 8"><path d="M2.6 7.4A2.2 2.2 0 0 1 2.2 3.2A3.2 3.2 0 0 1 8.3 2.6A2.4 2.4 0 0 1 9 7.4Z" fill="#e8f4ea" stroke="#2f9e4f" stroke-width="1.1"/></svg>
  <span class="ttl" style="left:789.5px;top:199px">内存</span>
  <div class="tag" style="left:990px;top:201px;width:24px;height:11.5px;line-height:11.5px;color:#e6f6ea;background:#2f9e4f;font-size:6.8px">7.3 G</div>
  <div class="sep" style="left:774px;top:220.2px;width:244.6px"></div>
  <span class="abs" style="left:803.4px;top:233px;width:3px;height:3px;border-radius:50%;background:#e0303a"></span>
  <span class="lbl" style="left:810px;top:229.5px">已使用</span>
  <span class="lbl ctr" style="left:797px;top:241.8px;width:40px">4.8 G</span>
  <span class="abs" style="left:886px;top:233px;width:3px;height:3px;border-radius:50%;background:#999"></span>
  <span class="lbl" style="left:893px;top:229.5px">缓存</span>
  <span class="lbl ctr" style="left:876px;top:241.8px;width:40px">2.1 G</span>
  <span class="abs" style="left:965.6px;top:233px;width:3px;height:3px;border-radius:50%;background:#3fb34f"></span>
  <span class="lbl" style="left:972px;top:229.5px">空闲</span>
  <span class="lbl ctr" style="left:955px;top:241.8px;width:40px">431.9 M</span>
  <svg class="abs" style="left:1025px;top:207px" width="34" height="34" viewBox="-17 -17 34 34">
    <g transform="rotate(-90)">
    <circle r="11.8" fill="none" stroke="#d0303a" stroke-width="8.3" stroke-dasharray="48.6 100" />
    <circle r="11.8" fill="none" stroke="#7a7a7a" stroke-width="8.3" stroke-dasharray="0 48.6 20.5 100"/>
    <circle r="11.8" fill="none" stroke="#2f9e4f" stroke-width="8.3" stroke-dasharray="0 69.6 4.5 100"/>
    </g>
    <circle r="16" fill="none" stroke="#ddd" stroke-width="0.5"/>
    <circle r="7.7" fill="#121212" stroke="#ddd" stroke-width="0.5"/>
  </svg>

  <!-- network -->
  <svg class="abs" style="left:772px;top:279.5px" width="10" height="9" viewBox="0 0 10 9"><path d="M0.6 3.2Q5 -0.8 9.4 3.2M2.2 5Q5 2.4 7.8 5M3.7 6.7Q5 5.6 6.3 6.7" fill="none" stroke="#2f9e4f" stroke-width="0.9"/><circle cx="5" cy="8.2" r="0.8" fill="#2f9e4f"/></svg>
  <span class="ttl" style="left:787px;top:277.5px">网络</span>
  <svg class="abs" style="left:815px;top:274px" width="251" height="22" viewBox="0 0 251 22">
    <path d="M0 2.4h251M0 6h251M0 10h251M0 14h251" stroke="#191919" stroke-width="0.6"/>
    <path d="M0 19.5h251" stroke="#4a4a4a" stroke-width="1.2"/>
    <path d="M5 19.5h200" stroke="#3d6fd8" stroke-width="1.2"/>
    <polyline points="5,19.5 15,19.5 24.8,2.9 34.5,19.5 45,19.5 55,18.5 64.4,14 73.6,19.5 251,19.5" fill="none" stroke="#3fcf8f" stroke-width="1.2"/>
  </svg>
  <div class="sep" style="left:772px;top:300px;width:293px"></div>
  <span class="abs" style="left:813.6px;top:312.2px;width:3px;height:3px;border-radius:50%;background:#3fcf2f"></span>
  <span class="lbl ctr" style="left:876px;top:309px;width:70px">速度</span>
  <span class="lbl ctr" style="left:981px;top:309px;width:70px">已用流量</span>
  <span class="lbl ctr" style="left:795px;top:320.8px;width:40px">上传</span>
  <span class="lbl ctr" style="left:876px;top:321.2px;width:70px">1.4 KB/s</span>
  <span class="lbl ctr" style="left:981px;top:321.2px;width:70px">8.5 MB</span>
  <span class="lbl ctr" style="left:795px;top:332px;width:40px">下载</span>
  <span class="lbl ctr" style="left:876px;top:332.5px;width:70px">360.0 B/s</span>
  <span class="lbl ctr" style="left:981px;top:332.5px;width:70px">175.4 MB</span>

  <!-- disk -->
  <svg class="abs" style="left:772px;top:367px" width="10" height="10.5" viewBox="0 0 10 10.5"><path d="M0 0.8Q0 0 0.8 0H7L10 2.8V9.7Q10 10.5 9.2 10.5H0.8Q0 10.5 0 9.7Z" fill="#2f9e4f"/><circle cx="5" cy="6.2" r="1.8" fill="none" stroke="#163" stroke-width="0.8"/><path d="M3 0.6h3.4v2h-3.4z" fill="#1c6a35"/></svg>
  <span class="ttl" style="left:787px;top:365px">磁盘</span>
  <div class="tag" style="left:975px;top:366.3px;width:53px;height:11.4px;line-height:11.4px;color:#e6f6ea;background:#2f9e4f;font-size:6.6px">36.4 G / 39.2 G</div>
  <div class="sep" style="left:772px;top:388.2px;width:260px"></div>
  <div class="abs" style="left:1041px;top:362px;width:17.7px;height:58.5px;border:1px solid #e8e8e8;border-radius:3px;background:linear-gradient(#e8e8e8 0,#e8e8e8 4.6px,#3c9a55 4.6px,#8a6a45 55%,#c0403c 100%)"></div>
  <span class="abs" style="left:788.8px;top:400px;width:3px;height:3px;border-radius:50%;background:#3fcf2f"></span>
  <div class="tag" style="left:781px;top:407.3px;width:18.6px;height:11.6px;line-height:11.6px;color:#2f9e9e;background:#13262a">vda</div>
  <span class="lbl ctr" style="left:826px;top:396.8px;width:40px">类型</span>
  <div class="tag" style="left:835.6px;top:407.3px;width:21px;height:11.6px;line-height:11.6px;color:#c99530;background:#2a2113">ext4</div>
  <span class="lbl ctr" style="left:895px;top:396.8px;width:52px">读 / s</span>
  <span class="lbl ctr" style="left:895px;top:409.3px;width:52px">0.0 B</span>
  <span class="lbl ctr" style="left:969px;top:396.8px;width:52px">写 / s</span>
  <span class="lbl ctr" style="left:969px;top:409.3px;width:52px">20.0 KB</span>
  <!-- table -->
  <div class="abs" style="left:771.7px;top:433.6px;width:296px;height:21px;background:#161616;border-radius:4px 4px 0 0;border-bottom:1px solid #222"></div>
  <div class="abs" style="left:845.7px;top:438px;width:1px;height:11px;background:#222"></div>
  <div class="abs" style="left:919.6px;top:438px;width:1px;height:11px;background:#222"></div>
  <div class="abs" style="left:993.5px;top:438px;width:1px;height:11px;background:#222"></div>
  <span class="lbl" style="left:776.5px;top:439.5px;color:#e0e0e0">挂载</span>
  <span class="lbl" style="left:850.2px;top:439.5px;color:#e0e0e0">大小</span>
  <span class="lbl" style="left:924.2px;top:439.5px;color:#e0e0e0">可用</span>
  <span class="lbl ctr" style="left:1010px;top:439.5px;width:41px;color:#e0e0e0">已用%</span>
  <div class="tag" style="left:776px;top:460px;width:12.4px;height:11.2px;line-height:11.2px;color:#2f9e9e;background:#13262a">/</div>
  <span class="lbl" style="left:850.2px;top:462px">39.2 G</span>
  <span class="lbl" style="left:924.2px;top:462px">2.8 G</span>
  <div class="tag" style="left:1017px;top:460.1px;width:22px;height:11.6px;line-height:11.6px;color:#fde;background:#d9363e">93%</div>
  <div class="abs" style="left:771.7px;top:476px;width:296px;height:1px;background:#222"></div>
</div>
</body></html>
